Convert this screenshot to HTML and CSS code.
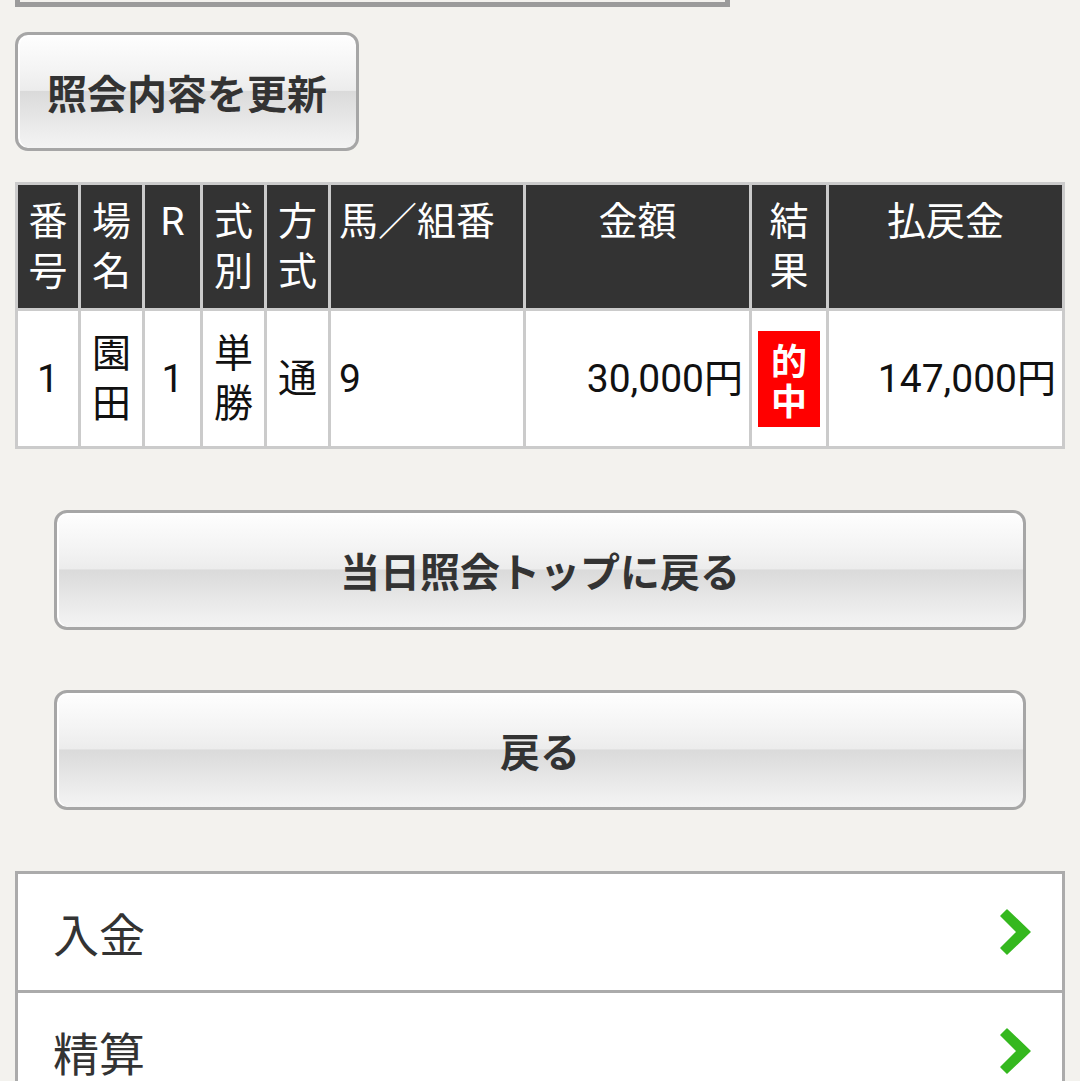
FILE: index.html
```html
<!DOCTYPE html>
<html lang="ja">
<head>
<meta charset="utf-8">
<title>照会結果</title>
<link rel="stylesheet" href="styles.css">
</head>
<body>
<div class="page">
  <div class="topbox"></div>

  <div class="update-row">
    <a class="btn btn-update" href="#">照会内容を更新</a>
  </div>

  <table class="result">
    <colgroup>
      <col class="c-no">
      <col class="c-place">
      <col class="c-race">
      <col class="c-kind">
      <col class="c-method">
      <col class="c-horse">
      <col class="c-amount">
      <col class="c-result">
      <col class="c-payout">
    </colgroup>
    <thead>
      <tr class="head-row">
        <th>番号</th>
        <th>場名</th>
        <th>R</th>
        <th>式別</th>
        <th>方式</th>
        <th class="left">馬／組番</th>
        <th>金額</th>
        <th>結果</th>
        <th>払戻金</th>
      </tr>
    </thead>
    <tbody>
      <tr class="body-row">
        <td>1</td>
        <td>園田</td>
        <td>1</td>
        <td>単勝</td>
        <td>通</td>
        <td class="left">9</td>
        <td class="right">30,000円</td>
        <td><span class="hit">的中</span></td>
        <td class="right">147,000円</td>
      </tr>
    </tbody>
  </table>

  <div class="nav-buttons">
    <a class="btn btn-wide" href="#">当日照会トップに戻る</a>
    <a class="btn btn-wide" href="#">戻る</a>
  </div>

  <ul class="menu">
    <li>
      <a href="#"><span>入金</span>
        <svg class="chev" width="32" height="46" viewBox="0 0 32 46"><polygon points="1,7 7,1 30,23 7,45 1,39 17,23" fill="#35b81f" stroke="#35b81f" stroke-width="1.5" stroke-linejoin="round"/></svg>
      </a>
    </li>
    <li>
      <a href="#"><span>精算</span>
        <svg class="chev" width="32" height="46" viewBox="0 0 32 46"><polygon points="1,7 7,1 30,23 7,45 1,39 17,23" fill="#35b81f" stroke="#35b81f" stroke-width="1.5" stroke-linejoin="round"/></svg>
      </a>
    </li>
  </ul>
</div>
</body>
</html>
```

FILE: styles.css
```css
html, body {
  margin: 0;
  padding: 0;
}

body {
  background: #f3f2ee;
  font-family: Roboto, "Noto Sans CJK JP", sans-serif;
  color: #111;
}

.page {
  padding: 0 15px;
}

.topbox {
  box-sizing: border-box;
  width: 715px;
  height: 50px;
  margin-top: -43px;
  border: 5px solid #9b9b9b;
  background: #f3f2ee;
}

.btn {
  box-sizing: border-box;
  display: flex;
  align-items: center;
  justify-content: center;
  border: 3px solid #a6a6a6;
  border-radius: 13px;
  background: linear-gradient(to bottom, #fefefe 0%, #f4f4f4 30%, #ececec 49%, #dadada 50%, #e2e2e2 65%, #efefef 90%, #f3f3f3 100%);
  box-shadow: inset 0 2px 0 #ffffff, inset 2px 0 0 #ffffff;
  color: #333;
  font-family: "Noto Sans CJK JP", sans-serif;
  font-weight: bold;
  font-size: 40px;
  text-decoration: none;
  white-space: nowrap;
}

.update-row {
  display: flex;
  margin-top: 25px;
}

.btn-update {
  width: 344px;
  height: 119px;
}

.result {
  margin-top: 31px;
  width: 1050px;
  table-layout: fixed;
  border-collapse: separate;
  border-spacing: 3px;
  background: #cbcbcb;
  font-size: 39px;
  line-height: 50px;
}

.c-no { width: 60px; }
.c-place { width: 61px; }
.c-race { width: 55px; }
.c-kind { width: 61px; }
.c-method { width: 61px; }
.c-horse { width: 192px; }
.c-amount { width: 223px; }
.c-result { width: 74px; }
.c-payout { width: 233px; }

.result th,
.result td {
  padding: 0 6px;
  text-align: center;
  font-weight: normal;
}

.head-row {
  height: 123px;
}

.result th {
  background: #333333;
  color: #ffffff;
  vertical-align: top;
  padding-top: 12px;
}

.body-row {
  height: 135px;
}

.result td {
  background: #ffffff;
  color: #111;
  vertical-align: middle;
}

.result .left {
  text-align: left;
  padding-left: 8px;
}

.result .right {
  text-align: right;
  padding-right: 6px;
}

.hit {
  display: block;
  box-sizing: border-box;
  width: 62px;
  margin: 0 auto;
  padding: 8px 0;
  background: #ff0000;
  color: #ffffff;
  font-family: "Noto Sans CJK JP", sans-serif;
  font-weight: bold;
  font-size: 36px;
  line-height: 40px;
  text-align: center;
}

.nav-buttons {
  display: flex;
  flex-direction: column;
  gap: 60px;
  margin-top: 61px;
  padding: 0 39px;
}

.btn-wide {
  height: 120px;
}

.menu {
  list-style: none;
  margin: 61px 0 0;
  padding: 0;
  border: 3px solid #ababab;
  background: #ffffff;
}

.menu li + li {
  border-top: 3px solid #ababab;
}

.menu a {
  display: flex;
  align-items: center;
  justify-content: space-between;
  height: 116px;
  padding: 0 30px 0 35px;
  color: #333;
  font-family: "Noto Sans CJK JP", sans-serif;
  font-size: 46px;
  text-decoration: none;
}

.chev {
  display: block;
}
```
